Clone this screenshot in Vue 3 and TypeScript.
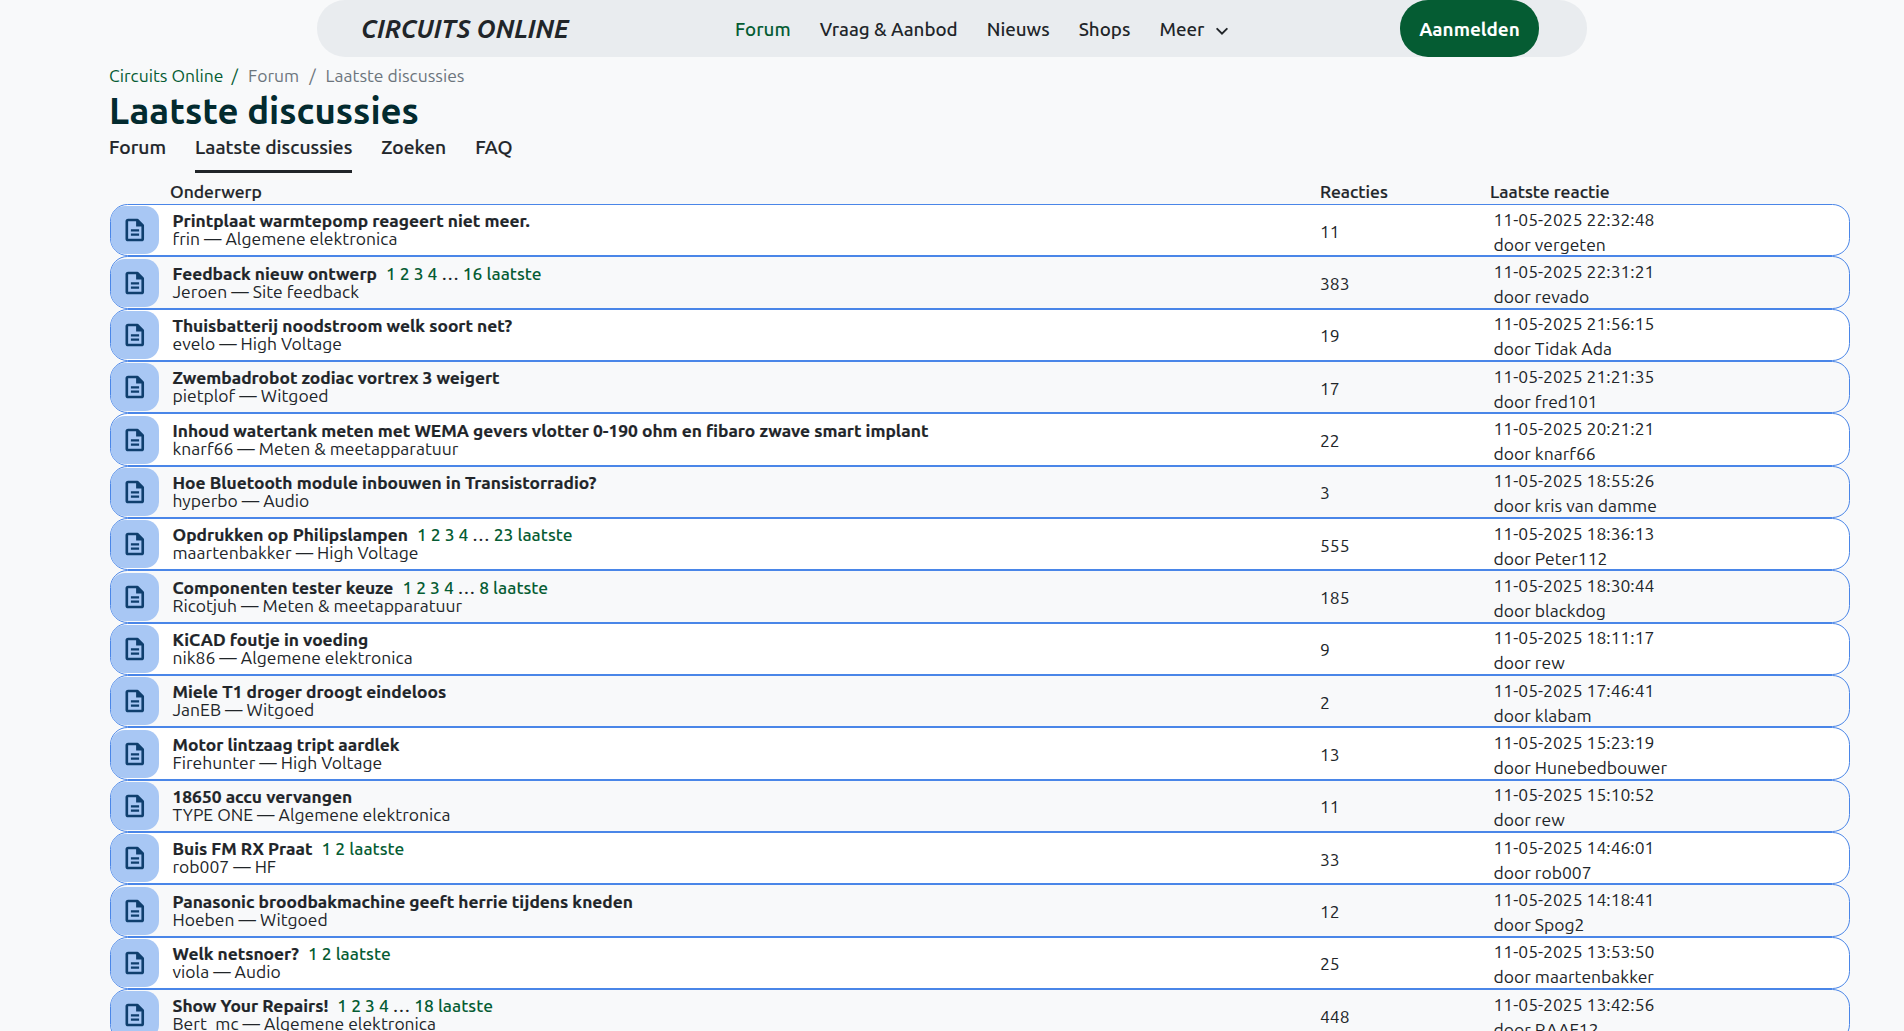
<script setup lang="ts">
interface Row { t: string; p?: string; a: string; f: string; n: number; d: string; u: string }
const rows: Row[] = [
  { t: 'Printplaat warmtepomp reageert niet meer.', a: 'frin', f: 'Algemene elektronica', n: 11, d: '22:32:48', u: 'vergeten' },
  { t: 'Feedback nieuw ontwerp', p: '16', a: 'Jeroen', f: 'Site feedback', n: 383, d: '22:31:21', u: 'revado' },
  { t: 'Thuisbatterij noodstroom welk soort net?', a: 'evelo', f: 'High Voltage', n: 19, d: '21:56:15', u: 'Tidak Ada' },
  { t: 'Zwembadrobot zodiac vortrex 3 weigert', a: 'pietplof', f: 'Witgoed', n: 17, d: '21:21:35', u: 'fred101' },
  { t: 'Inhoud watertank meten met WEMA gevers vlotter 0-190 ohm en fibaro zwave smart implant', a: 'knarf66', f: 'Meten & meetapparatuur', n: 22, d: '20:21:21', u: 'knarf66' },
  { t: 'Hoe Bluetooth module inbouwen in Transistorradio?', a: 'hyperbo', f: 'Audio', n: 3, d: '18:55:26', u: 'kris van damme' },
  { t: 'Opdrukken op Philipslampen', p: '23', a: 'maartenbakker', f: 'High Voltage', n: 555, d: '18:36:13', u: 'Peter112' },
  { t: 'Componenten tester keuze', p: '8', a: 'Ricotjuh', f: 'Meten & meetapparatuur', n: 185, d: '18:30:44', u: 'blackdog' },
  { t: 'KiCAD foutje in voeding', a: 'nik86', f: 'Algemene elektronica', n: 9, d: '18:11:17', u: 'rew' },
  { t: 'Miele T1 droger droogt eindeloos', a: 'JanEB', f: 'Witgoed', n: 2, d: '17:46:41', u: 'klabam' },
  { t: 'Motor lintzaag tript aardlek', a: 'Firehunter', f: 'High Voltage', n: 13, d: '15:23:19', u: 'Hunebedbouwer' },
  { t: '18650 accu vervangen', a: 'TYPE ONE', f: 'Algemene elektronica', n: 11, d: '15:10:52', u: 'rew' },
  { t: 'Buis FM RX Praat', p: 'two', a: 'rob007', f: 'HF', n: 33, d: '14:46:01', u: 'rob007' },
  { t: 'Panasonic broodbakmachine geeft herrie tijdens kneden', a: 'Hoeben', f: 'Witgoed', n: 12, d: '14:18:41', u: 'Spog2' },
  { t: 'Welk netsnoer?', p: 'two', a: 'viola', f: 'Audio', n: 25, d: '13:53:50', u: 'maartenbakker' },
  { t: 'Show Your Repairs!', p: '18', a: 'Bert_mc', f: 'Algemene elektronica', n: 448, d: '13:42:56', u: 'RAAF12' },
]
const nav = ['Vraag & Aanbod', 'Nieuws', 'Shops']
const tabs = ['Forum', 'Laatste discussies', 'Zoeken', 'FAQ']
function pages(p: string): string {
  if (p === 'two') return '1 2'
  return '1 2 3 4'
}
</script>

<template>
  <div class="page">
    <header class="bar">
      <a class="logo">CIRCUITS ONLINE</a>
      <nav class="menu">
        <a class="active">Forum</a>
        <a v-for="n in nav" :key="n">{{ n }}</a>
        <a class="more">Meer
          <svg width="14" height="14" viewBox="0 0 16 16"><path d="M2.500 5.500 8 11l5.500-5.500" fill="none" stroke="#212529" stroke-width="2.200" stroke-linecap="round"/></svg>
        </a>
      </nav>
      <a class="login">Aanmelden</a>
    </header>
    <main class="main">
      <div class="crumbs">
        <a class="green">Circuits Online</a><span class="sep sepg">/</span><a>Forum</a><span class="sep sep2">/</span><span>Laatste discussies</span>
      </div>
      <h1>Laatste discussies</h1>
      <div class="tabs">
        <a v-for="t in tabs" :key="t" :class="{ on: t === 'Laatste discussies' }">{{ t }}</a>
      </div>
      <div class="head">
        <span class="c1">Onderwerp</span><span class="c2">Reacties</span><span class="c3">Laatste reactie</span>
      </div>
      <div v-for="(r, i) in rows" :key="i" class="row" :class="{ odd: i % 2 === 0 }">
        <div class="icon">
          <svg width="20" height="24" viewBox="0 0 22 26"><path d="M3.500 2h10l6 6v14.500a1.500 1.500 0 0 1-1.500 1.500H3.500A1.500 1.500 0 0 1 2 22.500V3.500A1.500 1.500 0 0 1 3.500 2Z" fill="none" stroke="#0f3f6e" stroke-width="2.900" stroke-linejoin="round"/><path d="M13 2v6.500h6.500" fill="#0f3f6e" stroke="#0f3f6e" stroke-width="1.500"/><path d="M6.500 13.500h9M6.500 18h9" stroke="#0f3f6e" stroke-width="2.500"/></svg>
        </div>
        <div class="subj">
          <div class="title"><b>{{ r.t }}</b><span v-if="r.p" class="pg"><span class="gl">{{ pages(r.p) }}</span><template v-if="r.p !== 'two'"> … <span class="gl">{{ r.p }}</span></template> <span class="gl">laatste</span></span></div>
          <div class="sub">{{ r.a }} — {{ r.f }}</div>
        </div>
        <div class="num">{{ r.n }}</div>
        <div class="last"><div>11-05-2025 {{ r.d }}</div><div>door {{ r.u }}</div></div>
      </div>
    </main>
  </div>
</template>

<style scoped>
.page { height: 1031px; overflow: hidden; background: #f8f9fa; color: #212529; font-family: Ubuntu, "Noto Sans", sans-serif; font-size: 17.5px; }
.bar { margin-left: 317px; width: 1270px; height: 57px; box-sizing: border-box; display: flex; align-items: center; background: #e9ecef; border-radius: 28px; padding-left: 44px; }
.logo { width: 374px; font-size: 25px; font-weight: 700; font-style: italic; }
.menu { display: flex; gap: 29px; width: 665px; font-weight: 500; font-size: 18.800px; }
.active { color: #055c33; }
.more svg { margin-left: 6px; vertical-align: -2px; }
.login { width: 139px; height: 57px; display: flex; align-items: center; justify-content: center; background: #055c33; color: #fff; border-radius: 28px; font-weight: 700; font-size: 18.900px; }
.main { padding: 7px 54px 0 109px; }
.crumbs { height: 24px; line-height: 24px; color: #6c757d; }
.green { color: #055c33; }
.sep { padding: 0 10px 0 8px; }
.sep2 { padding: 0 10px; }
.sepg { color: #055c33; }
h1 { margin: 2px 0 0; font-size: 36.600px; line-height: 42px; font-weight: 700; color: #032b2f; }
.tabs { display: flex; gap: 29px; font-size: 19.250px; font-weight: 500; margin-top: 3px; -webkit-text-stroke: 0.2px currentColor; }
.tabs a { padding: 0 0 11px; line-height: 24px; border-bottom: 3px solid transparent; }
.tabs .on { border-bottom-color: #212529; }
.head { display: flex; font-weight: 500; height: 24px; line-height: 24px; padding-top: 7px; -webkit-text-stroke: 0.2px currentColor; }
.c1 { margin-left: 61px; width: 1150px; }
.c2 { width: 170px; }
.row { display: flex; align-items: center; height: 52.350px; box-sizing: border-box; border: 1px solid #4a86e8; border-radius: 17.500px; margin-left: 1px; }
.odd { background: #fff; }
.icon { width: 48px; height: 48px; border-radius: 14px; background: #a8c7f4; display: flex; align-items: center; justify-content: center; flex: none; }
.subj { width: 1161px; padding-left: 13.500px; box-sizing: border-box; line-height: 18px; flex: none; }
.title { font-size: 17.400px; }
.title b { -webkit-text-stroke: 0.2px currentColor; }
.pg { margin-left: 9px; font-weight: 500; }
.gl { color: #055c33; }
.num { width: 173.500px; flex: none; padding-top: 2px; }
.last { line-height: 25px; padding-top: 3px; }
</style>
